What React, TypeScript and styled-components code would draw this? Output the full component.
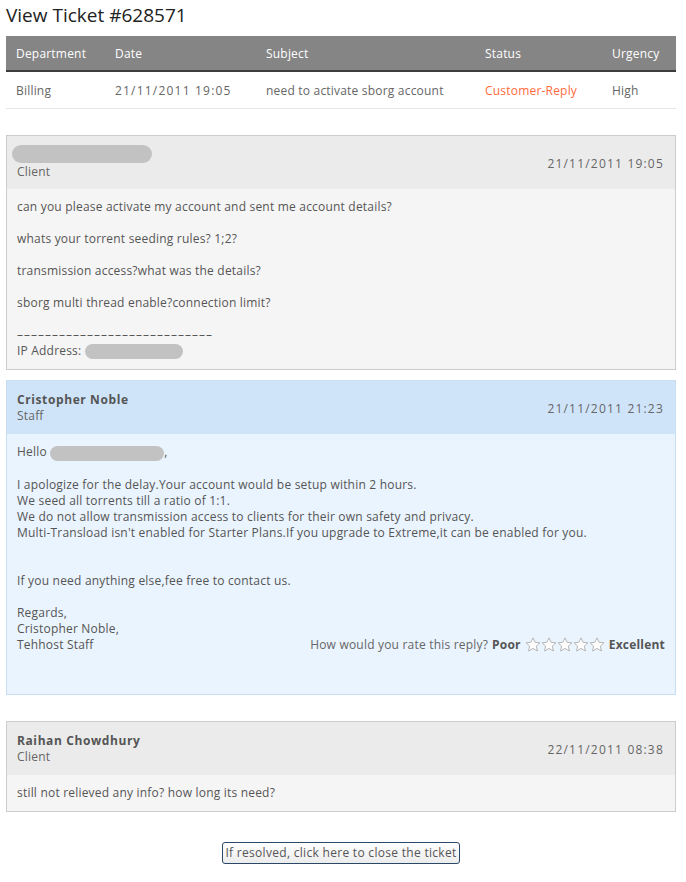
import React from "react";
import styled, { createGlobalStyle } from "styled-components";

const Global = createGlobalStyle`
  html, body { margin: 0; padding: 0; background: #ffffff; }
  body {
    font-family: "Open Sans", "DejaVu Sans", sans-serif;
    font-size: 12px;
    letter-spacing: 0.2px;
    color: #555;
  }
`;

const Page = styled.div`
  width: 670px;
  padding: 0 10px 0 6px;
`;

const Title = styled.h1`
  margin: 0;
  padding-top: 2px;
  height: 34px;
  font-size: 19px;
  font-weight: normal;
  letter-spacing: 0;
  color: #222;
  line-height: 26px;
`;

const Table = styled.table`
  width: 670px;
  border-collapse: collapse;
  font-size: 12px;
`;

const Th = styled.th<{ $w: number }>`
  width: ${(p) => p.$w}px;
  background: #858585;
  color: #fff;
  font-weight: normal;
  text-align: left;
  height: 34px;
  padding: 0 0 0 10px;
  border-bottom: 2px solid #3c3c3c;
`;

const Td = styled.td<{ $status?: boolean; $spaced?: boolean }>`
  height: 36px;
  padding: 0 0 0 10px;
  border-bottom: 1px solid #e6e6e6;
  color: ${(p) => (p.$status ? "#ff6a3d" : "#666")};
  letter-spacing: ${(p) => (p.$spaced ? "1.2px" : "0.2px")};
`;

const Box = styled.div<{ $staff?: boolean; $top: number }>`
  margin-top: ${(p) => p.$top}px;
  border: 1px solid ${(p) => (p.$staff ? "#c9def0" : "#cccccc")};
  background: ${(p) => (p.$staff ? "#eaf4fe" : "#f5f5f5")};
`;

const Header = styled.div<{ $staff?: boolean }>`
  height: 53px;
  box-sizing: border-box;
  background: ${(p) => (p.$staff ? "#cfe4f9" : "#ebebeb")};
  display: flex;
  justify-content: space-between;
  align-items: center;
  padding: 0 11px 0 10px;
`;

const Who = styled.div`
  display: flex;
  flex-direction: column;
  line-height: 16px;
  padding-top: 1px;
`;

const Name = styled.div`
  font-weight: bold;
  color: #555;
  font-size: 12px;
  letter-spacing: 0.6px;
`;

const Role = styled.div`
  color: #666;
`;

const When = styled.div`
  color: #666;
  letter-spacing: 1.2px;
  padding-top: 2px;
`;

const Body = styled.div<{ $extra?: number }>`
  padding: 10px 10px ${(p) => 10 + (p.$extra || 0)}px 10px;
  line-height: 16px;
  color: #555;
`;

const Blur = styled.span<{ $w: number; $h: number }>`
  display: inline-block;
  width: ${(p) => p.$w}px;
  height: ${(p) => p.$h}px;
  border-radius: ${(p) => p.$h / 2}px;
  background: #c2c2c2;
  vertical-align: middle;
`;

const NamePill = styled(Blur)`
  margin-left: -5px;
  margin-bottom: 1px;
  margin-top: -2px;
`;

const Rule = styled.span`
  letter-spacing: 1px;
`;

const LastLine = styled.div`
  display: flex;
  justify-content: space-between;
  align-items: center;
`;

const Rating = styled.div`
  display: flex;
  align-items: center;
  gap: 4px;
  color: #666;
  font-size: 12px;
  b { color: #555; }
`;

const Stars = styled.span`
  display: inline-flex;
`;

const Star = () => (
  <svg width="16" height="15" viewBox="0 0 16 15">
    <path
      d="M8 0.8 L10.1 5.3 L15 5.8 L11.3 9.1 L12.4 14 L8 11.4 L3.6 14 L4.7 9.1 L1 5.8 L5.9 5.3 Z"
      fill="#ffffff"
      stroke="#b5b5b5"
      strokeWidth="1"
    />
  </svg>
);

const Center = styled.div`
  display: flex;
  justify-content: center;
  margin-top: 30px;
`;

const Button = styled.button`
  font-family: "Open Sans", "DejaVu Sans", sans-serif;
  font-size: 12px;
  letter-spacing: 0.3px;
  color: #555;
  height: 22px;
  padding: 0 2px;
  border: 1px solid #2a4868;
  border-radius: 3px;
  background: linear-gradient(#ffffff, #ececec);
`;

export default function App() {
  return (
    <>
      <Global />
      <Page>
        <Title>View Ticket #628571</Title>
        <Table>
          <thead>
            <tr>
              <Th $w={89}>Department</Th>
              <Th $w={141}>Date</Th>
              <Th $w={209}>Subject</Th>
              <Th $w={117}>Status</Th>
              <Th $w={64}>Urgency</Th>
            </tr>
          </thead>
          <tbody>
            <tr>
              <Td>Billing</Td>
              <Td $spaced>21/11/2011 19:05</Td>
              <Td>need to activate sborg account</Td>
              <Td $status>Customer-Reply</Td>
              <Td>High</Td>
            </tr>
          </tbody>
        </Table>

        <Box $top={26}>
          <Header>
            <Who>
              <NamePill $w={140} $h={18} />
              <Role>Client</Role>
            </Who>
            <When>21/11/2011 19:05</When>
          </Header>
          <Body>
            can you please activate my account and sent me account details?
            <br />
            <br />
            whats your torrent seeding rules? 1;2?
            <br />
            <br />
            transmission access?what was the details?
            <br />
            <br />
            sborg multi thread enable?connection limit?
            <br />
            <br />
            <Rule>––––––––––––––––––––––––––––</Rule>
            <br />
            IP Address: <Blur $w={98} $h={15} />
          </Body>
        </Box>

        <Box $staff $top={10}>
          <Header $staff>
            <Who>
              <Name>Cristopher Noble</Name>
              <Role>Staff</Role>
            </Who>
            <When>21/11/2011 21:23</When>
          </Header>
          <Body $extra={31}>
            Hello <Blur $w={114} $h={15} />,
            <br />
            <br />
            I apologize for the delay.Your account would be setup within 2 hours.
            <br />
            We seed all torrents till a ratio of 1:1.
            <br />
            We do not allow transmission access to clients for their own safety and privacy.
            <br />
            Multi-Transload isn't enabled for Starter Plans.If you upgrade to Extreme,it can be enabled for you.
            <br />
            <br />
            <br />
            If you need anything else,fee free to contact us.
            <br />
            <br />
            Regards,
            <br />
            Cristopher Noble,
            <LastLine>
              <span>Tehhost Staff</span>
              <Rating>
                How would you rate this reply? <b>Poor</b>
                <Stars>
                  <Star />
                  <Star />
                  <Star />
                  <Star />
                  <Star />
                </Stars>
                <b>Excellent</b>
              </Rating>
            </LastLine>
          </Body>
        </Box>

        <Box $top={26}>
          <Header>
            <Who>
              <Name>Raihan Chowdhury</Name>
              <Role>Client</Role>
            </Who>
            <When>22/11/2011 08:38</When>
          </Header>
          <Body>still not relieved any info? how long its need?</Body>
        </Box>

        <Center>
          <Button>If resolved, click here to close the ticket</Button>
        </Center>
      </Page>
    </>
  );
}
